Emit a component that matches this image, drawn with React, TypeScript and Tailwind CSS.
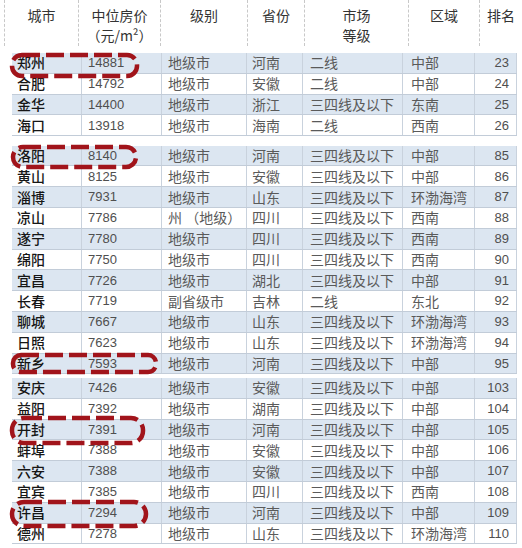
import React from "react";

type Row = [string, string, string, string, string, string, string];

const groups: Row[][] = [
  [
    ["郑州", "14881", "地级市", "河南", "二线", "中部", "23"],
    ["合肥", "14792", "地级市", "安徽", "二线", "中部", "24"],
    ["金华", "14400", "地级市", "浙江", "三四线及以下", "东南", "25"],
    ["海口", "13918", "地级市", "海南", "二线", "西南", "26"],
  ],
  [
    ["洛阳", "8140", "地级市", "河南", "三四线及以下", "中部", "85"],
    ["黄山", "8125", "地级市", "安徽", "三四线及以下", "中部", "86"],
    ["淄博", "7931", "地级市", "山东", "三四线及以下", "环渤海湾", "87"],
    ["凉山", "7786", "州 （地级）", "四川", "三四线及以下", "西南", "88"],
    ["遂宁", "7780", "地级市", "四川", "三四线及以下", "西南", "89"],
    ["绵阳", "7750", "地级市", "四川", "三四线及以下", "西南", "90"],
    ["宜昌", "7726", "地级市", "湖北", "三四线及以下", "中部", "91"],
    ["长春", "7719", "副省级市", "吉林", "二线", "东北", "92"],
    ["聊城", "7667", "地级市", "山东", "三四线及以下", "环渤海湾", "93"],
    ["日照", "7623", "地级市", "山东", "三四线及以下", "环渤海湾", "94"],
    ["新乡", "7593", "地级市", "河南", "三四线及以下", "中部", "95"],
  ],
  [
    ["安庆", "7426", "地级市", "安徽", "三四线及以下", "中部", "103"],
    ["益阳", "7392", "地级市", "湖南", "三四线及以下", "中部", "104"],
    ["开封", "7391", "地级市", "河南", "三四线及以下", "中部", "105"],
    ["蚌埠", "7388", "地级市", "安徽", "三四线及以下", "中部", "106"],
    ["六安", "7388", "地级市", "安徽", "三四线及以下", "中部", "107"],
    ["宜宾", "7385", "地级市", "四川", "三四线及以下", "西南", "108"],
    ["许昌", "7294", "地级市", "河南", "三四线及以下", "中部", "109"],
    ["德州", "7278", "地级市", "山东", "三四线及以下", "环渤海湾", "110"],
  ],
];

const cjk = "font-['Noto_Sans_CJK_SC','Noto_Sans',sans-serif]";
const num = "font-['Liberation_Sans','Noto_Sans_CJK_SC',sans-serif] text-[13px]";

function TableRow({ r, i }: { r: Row; i: number }) {
  const bg = i % 2 === 0 ? "bg-[#dce6f1]" : "bg-white";
  const cell = "flex items-center h-full border-r border-[#c9d2dd] whitespace-nowrap overflow-hidden";
  return (
    <div
      className={`grid grid-cols-[70px_80px_85px_56px_100px_72px_42px] h-[20.8px] border-b border-[#c2ccd8] ${bg}`}
    >
      <div className={`${cell} pl-[5px] text-[14px] text-[#161616] font-medium ${cjk}`}>{r[0]}</div>
      <div className={`${cell} pl-[6px] text-[#4f4f4f] ${num}`}>{r[1]}</div>
      <div className={`${cell} pl-[6px] text-[14px] text-[#5a5a5a] ${cjk}`}>{r[2]}</div>
      <div className={`${cell} pl-[5px] text-[14px] text-[#5a5a5a] ${cjk}`}>{r[3]}</div>
      <div className={`${cell} pl-[7px] text-[14px] text-[#5a5a5a] ${cjk}`}>{r[4]}</div>
      <div className={`${cell} pl-[8px] text-[14px] text-[#5a5a5a] ${cjk}`}>{r[5]}</div>
      <div className={`${cell} justify-end pr-[7px] text-[#4f4f4f] ${num}`}>{r[6]}</div>
    </div>
  );
}

function HeaderCell({ w, children }: { w: string; children: React.ReactNode }) {
  return (
    <div
      className={`${w} h-full flex flex-col items-center pt-[5px] border-l border-dashed border-[#c8c8c8] text-[14px] leading-[20px] text-[#333] ${cjk}`}
    >
      {children}
    </div>
  );
}

export default function App() {
  const ovals = [
    { x: 12, y: 55, w: 125, h: 21, rx: 10 },
    { x: 13, y: 147, w: 123, h: 20, rx: 10 },
    { x: 13, y: 355, w: 143, h: 17, rx: 8 },
    { x: 12, y: 418, w: 131, h: 25, rx: 12 },
    { x: 12, y: 502, w: 134, h: 24, rx: 12 },
  ];
  return (
    <div className="relative w-[522px] h-[548px] bg-white overflow-hidden">
      <div className="flex h-[46px] ml-[4px]">
        <HeaderCell w="w-[74px]">
          <span>城市</span>
        </HeaderCell>
        <HeaderCell w="w-[82px]">
          <span>中位房价</span>
          <span>（元/m²）</span>
        </HeaderCell>
        <HeaderCell w="w-[87px]">
          <span>级别</span>
        </HeaderCell>
        <HeaderCell w="w-[57px]">
          <span>省份</span>
        </HeaderCell>
        <HeaderCell w="w-[104px]">
          <span>市场</span>
          <span>等级</span>
        </HeaderCell>
        <HeaderCell w="w-[71px]">
          <span>区域</span>
        </HeaderCell>
        <HeaderCell w="w-[43px]">
          <span>排名</span>
        </HeaderCell>
      </div>
      <div className="ml-[12px] w-[505px] mt-[7px] flex flex-col">
        <div className="flex flex-col">
          {groups[0].map((r, i) => (
            <TableRow key={i} r={r} i={i} />
          ))}
        </div>
        <div className="flex flex-col mt-[9.5px]">
          {groups[1].map((r, i) => (
            <TableRow key={i} r={r} i={i} />
          ))}
        </div>
        <div className="flex flex-col mt-[3.5px]">
          {groups[2].map((r, i) => (
            <TableRow key={i} r={r} i={i} />
          ))}
        </div>
      </div>
      <svg className="absolute inset-0 pointer-events-none" width="522" height="548" viewBox="0 0 522 548">
        {ovals.map((o, i) => (
          <rect
            key={i}
            x={o.x}
            y={o.y}
            width={o.w}
            height={o.h}
            rx={o.rx}
            ry={o.rx}
            fill="none"
            stroke="#a1141b"
            strokeWidth={4.5}
            strokeDasharray="18 6"
          />
        ))}
      </svg>
    </div>
  );
}
